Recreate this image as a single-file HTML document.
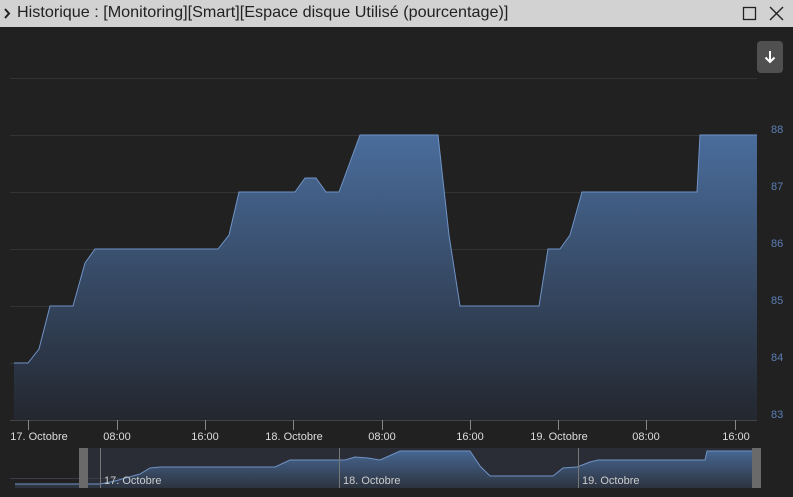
<!DOCTYPE html>
<html><head><style>
body{margin:0;width:793px;height:497px;overflow:hidden;background:#212121;font-family:"Liberation Sans",sans-serif;}
.title{position:absolute;left:0;top:0;width:793px;height:27px;background:#d2d2d2;color:#222;}
.title span{position:absolute;left:17px;top:4px;font-size:16px;white-space:nowrap;transform:scaleX(1.01);transform-origin:left;}
.btn{position:absolute;left:757px;top:41px;width:26px;height:32px;background:#505050;border-radius:4px;}
</style></head><body>
<div class="title">
<svg style="position:absolute;left:3px;top:8px" width="8" height="11"><path d="M2 1 L6 5.5 L2 10" stroke="#222" stroke-width="2" fill="none"/></svg>
<span>Historique : [Monitoring][Smart][Espace disque Utilisé (pourcentage)]</span>
<svg style="position:absolute;left:742px;top:6px" width="44" height="16"><rect x="1.5" y="1.5" width="12" height="12" stroke="#222" stroke-width="1.3" fill="none"/><path d="M28 1 L41 14 M41 1 L28 14" stroke="#222" stroke-width="1.4"/></svg>
</div>
<div class="btn"><svg width="26" height="32"><path d="M13 10 V21 M8.5 16.5 L13 21 L17.5 16.5" stroke="#fff" stroke-width="2" fill="none"/></svg></div>
<svg style="position:absolute;left:0;top:0" width="793" height="497">
<defs><linearGradient id="g" x1="0" y1="0" x2="0" y2="1"><stop offset="0" stop-color="#4a6d9c"/><stop offset="1" stop-color="#23272f"/></linearGradient>
<linearGradient id="g2" x1="0" y1="0" x2="0" y2="1"><stop offset="0" stop-color="#4a6d9c"/><stop offset="1" stop-color="#2d3440"/></linearGradient></defs>
<g stroke="#333" stroke-width="1">
<line x1="10" y1="78.5" x2="757" y2="78.5"/><line x1="10" y1="135.5" x2="757" y2="135.5"/><line x1="10" y1="192.5" x2="757" y2="192.5"/><line x1="10" y1="249.5" x2="757" y2="249.5"/><line x1="10" y1="306.5" x2="757" y2="306.5"/><line x1="10" y1="363.5" x2="757" y2="363.5"/>
</g>
<path d="M14 420 L14 363 L28 363 L39 349 L50 306 L73 306 L85 263 L95 249 L218 249 L229 235 L239 192 L295 192 L305 178 L316 178 L326 192 L339 192 L360 135 L438 135 L449 235 L460 306 L539 306 L548 249 L560 249 L570 235 L582 192 L697 192 L700 135 L757 135 L757 420 Z" fill="url(#g)"/>
<path d="M14 363 L28 363 L39 349 L50 306 L73 306 L85 263 L95 249 L218 249 L229 235 L239 192 L295 192 L305 178 L316 178 L326 192 L339 192 L360 135 L438 135 L449 235 L460 306 L539 306 L548 249 L560 249 L570 235 L582 192 L697 192 L700 135 L757 135" fill="none" stroke="#6f93c6" stroke-width="1"/>
<line x1="10" y1="420.5" x2="757" y2="420.5" stroke="#444"/>
<g stroke="#888"><line x1="28.5" y1="420" x2="28.5" y2="430"/><line x1="117.5" y1="420" x2="117.5" y2="430"/><line x1="205.5" y1="420" x2="205.5" y2="430"/><line x1="293.5" y1="420" x2="293.5" y2="430"/><line x1="382.5" y1="420" x2="382.5" y2="430"/><line x1="470.5" y1="420" x2="470.5" y2="430"/><line x1="558.5" y1="420" x2="558.5" y2="430"/><line x1="646.5" y1="420" x2="646.5" y2="430"/><line x1="735.5" y1="420" x2="735.5" y2="430"/></g>
<g fill="#ddd" font-size="11" text-anchor="middle" font-family="Liberation Sans Narrow, Liberation Sans, sans-serif">
<text x="39" y="440">17. Octobre</text><text x="117" y="440">08:00</text><text x="205" y="440">16:00</text><text x="294" y="440">18. Octobre</text><text x="382" y="440">08:00</text><text x="470" y="440">16:00</text><text x="559" y="440">19. Octobre</text><text x="646" y="440">08:00</text><text x="736" y="440">16:00</text>
</g>
<g fill="#5b7fb5" font-size="11" font-family="Liberation Sans Narrow, Liberation Sans, sans-serif">
<text x="771" y="133">88</text><text x="771" y="190">87</text><text x="771" y="247">86</text><text x="771" y="304">85</text><text x="771" y="361">84</text><text x="771" y="418">83</text>
</g>
<rect x="88" y="448" width="664" height="40" fill="#2a2d36"/>
<line x1="10" y1="478.5" x2="757" y2="478.5" stroke="#3a3d45"/>
<path d="M15 488 L15 484 L100 484 L115 481 L140 474 L150 468 L160 467 L275 467 L290 460 L345 460 L355 457 L368 458 L380 460 L400 451 L470 451 L480 466 L490 476 L553 476 L563 468 L577 467 L590 462 L598 460 L705 460 L707 451 L752 451 L752 488 Z" fill="url(#g2)" opacity="0.9"/>
<path d="M15 484 L100 484 L115 481 L140 474 L150 468 L160 467 L275 467 L290 460 L345 460 L355 457 L368 458 L380 460 L400 451 L470 451 L480 466 L490 476 L553 476 L563 468 L577 467 L590 462 L598 460 L705 460 L707 451 L752 451" fill="none" stroke="#6f93c6"/>
<g stroke="#777"><line x1="100.5" y1="448" x2="100.5" y2="488"/><line x1="339.5" y1="448" x2="339.5" y2="488"/><line x1="578.5" y1="448" x2="578.5" y2="488"/></g>
<g fill="#ccc" font-size="11" font-family="Liberation Sans Narrow, Liberation Sans, sans-serif"><text x="104" y="484">17. Octobre</text><text x="343" y="484">18. Octobre</text><text x="582" y="484">19. Octobre</text></g>
<rect x="79" y="448" width="9" height="40" fill="#6a6a6a"/><rect x="752" y="448" width="9" height="40" fill="#6a6a6a"/>
</svg>
</body></html>
